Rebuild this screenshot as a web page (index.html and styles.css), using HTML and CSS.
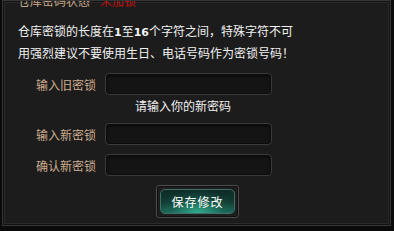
FILE: index.html
```html
<!DOCTYPE html>
<html lang="zh-CN">
<head>
    <meta charset="UTF-8">
    <title>仓库密锁</title>
    <link rel="stylesheet" href="styles.css">
</head>
<body>
    <div class="panel">
        <div class="status">仓库密码状态<span class="status-value">未加锁</span></div>
        <div class="notice">
            <p>仓库密锁的长度在<b>1</b>至<b>16</b>个字符之间，特殊字符不可</p>
            <p>用强烈建议不要使用生日、电话号码作为密锁号码！</p>
        </div>
        <form class="lock-form">
            <div class="form-row">
                <label for="oldLock">输入旧密锁</label>
                <input type="password" id="oldLock">
            </div>
            <div class="hint">请输入你的新密码</div>
            <div class="form-row row-new">
                <label for="newLock">输入新密锁</label>
                <input type="password" id="newLock">
            </div>
            <div class="form-row row-confirm">
                <label for="confirmLock">确认新密锁</label>
                <input type="password" id="confirmLock">
            </div>
            <div class="button-row">
                <button type="button" class="save-btn"><span>保存修改</span></button>
            </div>
        </form>
    </div>
</body>
</html>
```

FILE: styles.css
```css
body {
    margin: 0;
    background-color: #0b0b0b;
    font-family: "Noto Sans CJK SC", "DejaVu Sans", sans-serif;
    font-size: 12px;
    color: #eeeeee;
    overflow: hidden;
}
.panel {
    width: 389px;
    height: 226px;
    margin-left: 2px;
    box-sizing: border-box;
    border: 1px solid #363636;
    background-color: #1c1c1c;
    box-shadow: inset 0 0 0 1px #121212, inset 0 0 0 2px #2a2a2a;
    overflow: hidden;
}
.status {
    margin-top: -10px;
    padding-left: 15px;
    line-height: 20px;
    color: #c9a888;
}
.status-value {
    margin-left: 10px;
    color: #c41010;
}
.notice {
    margin-top: 10px;
    padding-left: 15px;
}
.notice p {
    margin: 0;
    line-height: 20px;
    color: #f2f2f2;
}
.notice b {
    font-family: "DejaVu Sans", sans-serif;
    font-size: 11px;
}
.lock-form {
    margin-top: 10px;
}
.form-row {
    display: flex;
    align-items: center;
    gap: 9px;
    height: 22px;
}
.form-row label {
    width: 93px;
    text-align: right;
    color: #cdac8e;
}
.form-row input {
    width: 167px;
    height: 22px;
    box-sizing: border-box;
    border: 1px solid #3a3a3a;
    border-radius: 4px;
    background-color: #141414;
    box-shadow: inset 0 0 0 1px #0c0c0c, inset 0 2px 3px rgba(0, 0, 0, 0.6);
    color: #fff;
    outline: none;
}
.hint {
    margin-top: 1px;
    padding-left: 132px;
    line-height: 20px;
    color: #f0f0f0;
}
.row-new {
    margin-top: 7px;
}
.row-confirm {
    margin-top: 9px;
}
.button-row {
    margin-top: 9px;
    padding-left: 153px;
}
.save-btn {
    display: block;
    width: 83px;
    height: 33px;
    padding: 3px;
    box-sizing: border-box;
    border: 1px solid #4c4c4c;
    border-radius: 3px;
    background-color: #1e1e1e;
    box-shadow: inset 0 0 0 1px #101010;
    cursor: pointer;
}
.save-btn span {
    display: flex;
    align-items: center;
    justify-content: center;
    height: 100%;
    border: 1px solid #3f6f66;
    border-radius: 5px;
    box-sizing: border-box;
    background: radial-gradient(ellipse at 50% 100%, rgba(60, 200, 160, 0.7) 0%, rgba(30, 110, 90, 0.3) 50%, rgba(0, 0, 0, 0) 75%),
        linear-gradient(to bottom, #0d2a25 0%, #123c34 55%, #1d6b5a 100%);
    color: #ffffff;
    font-family: "Noto Sans CJK SC", sans-serif;
    font-size: 12px;
    letter-spacing: 1px;
}
```
